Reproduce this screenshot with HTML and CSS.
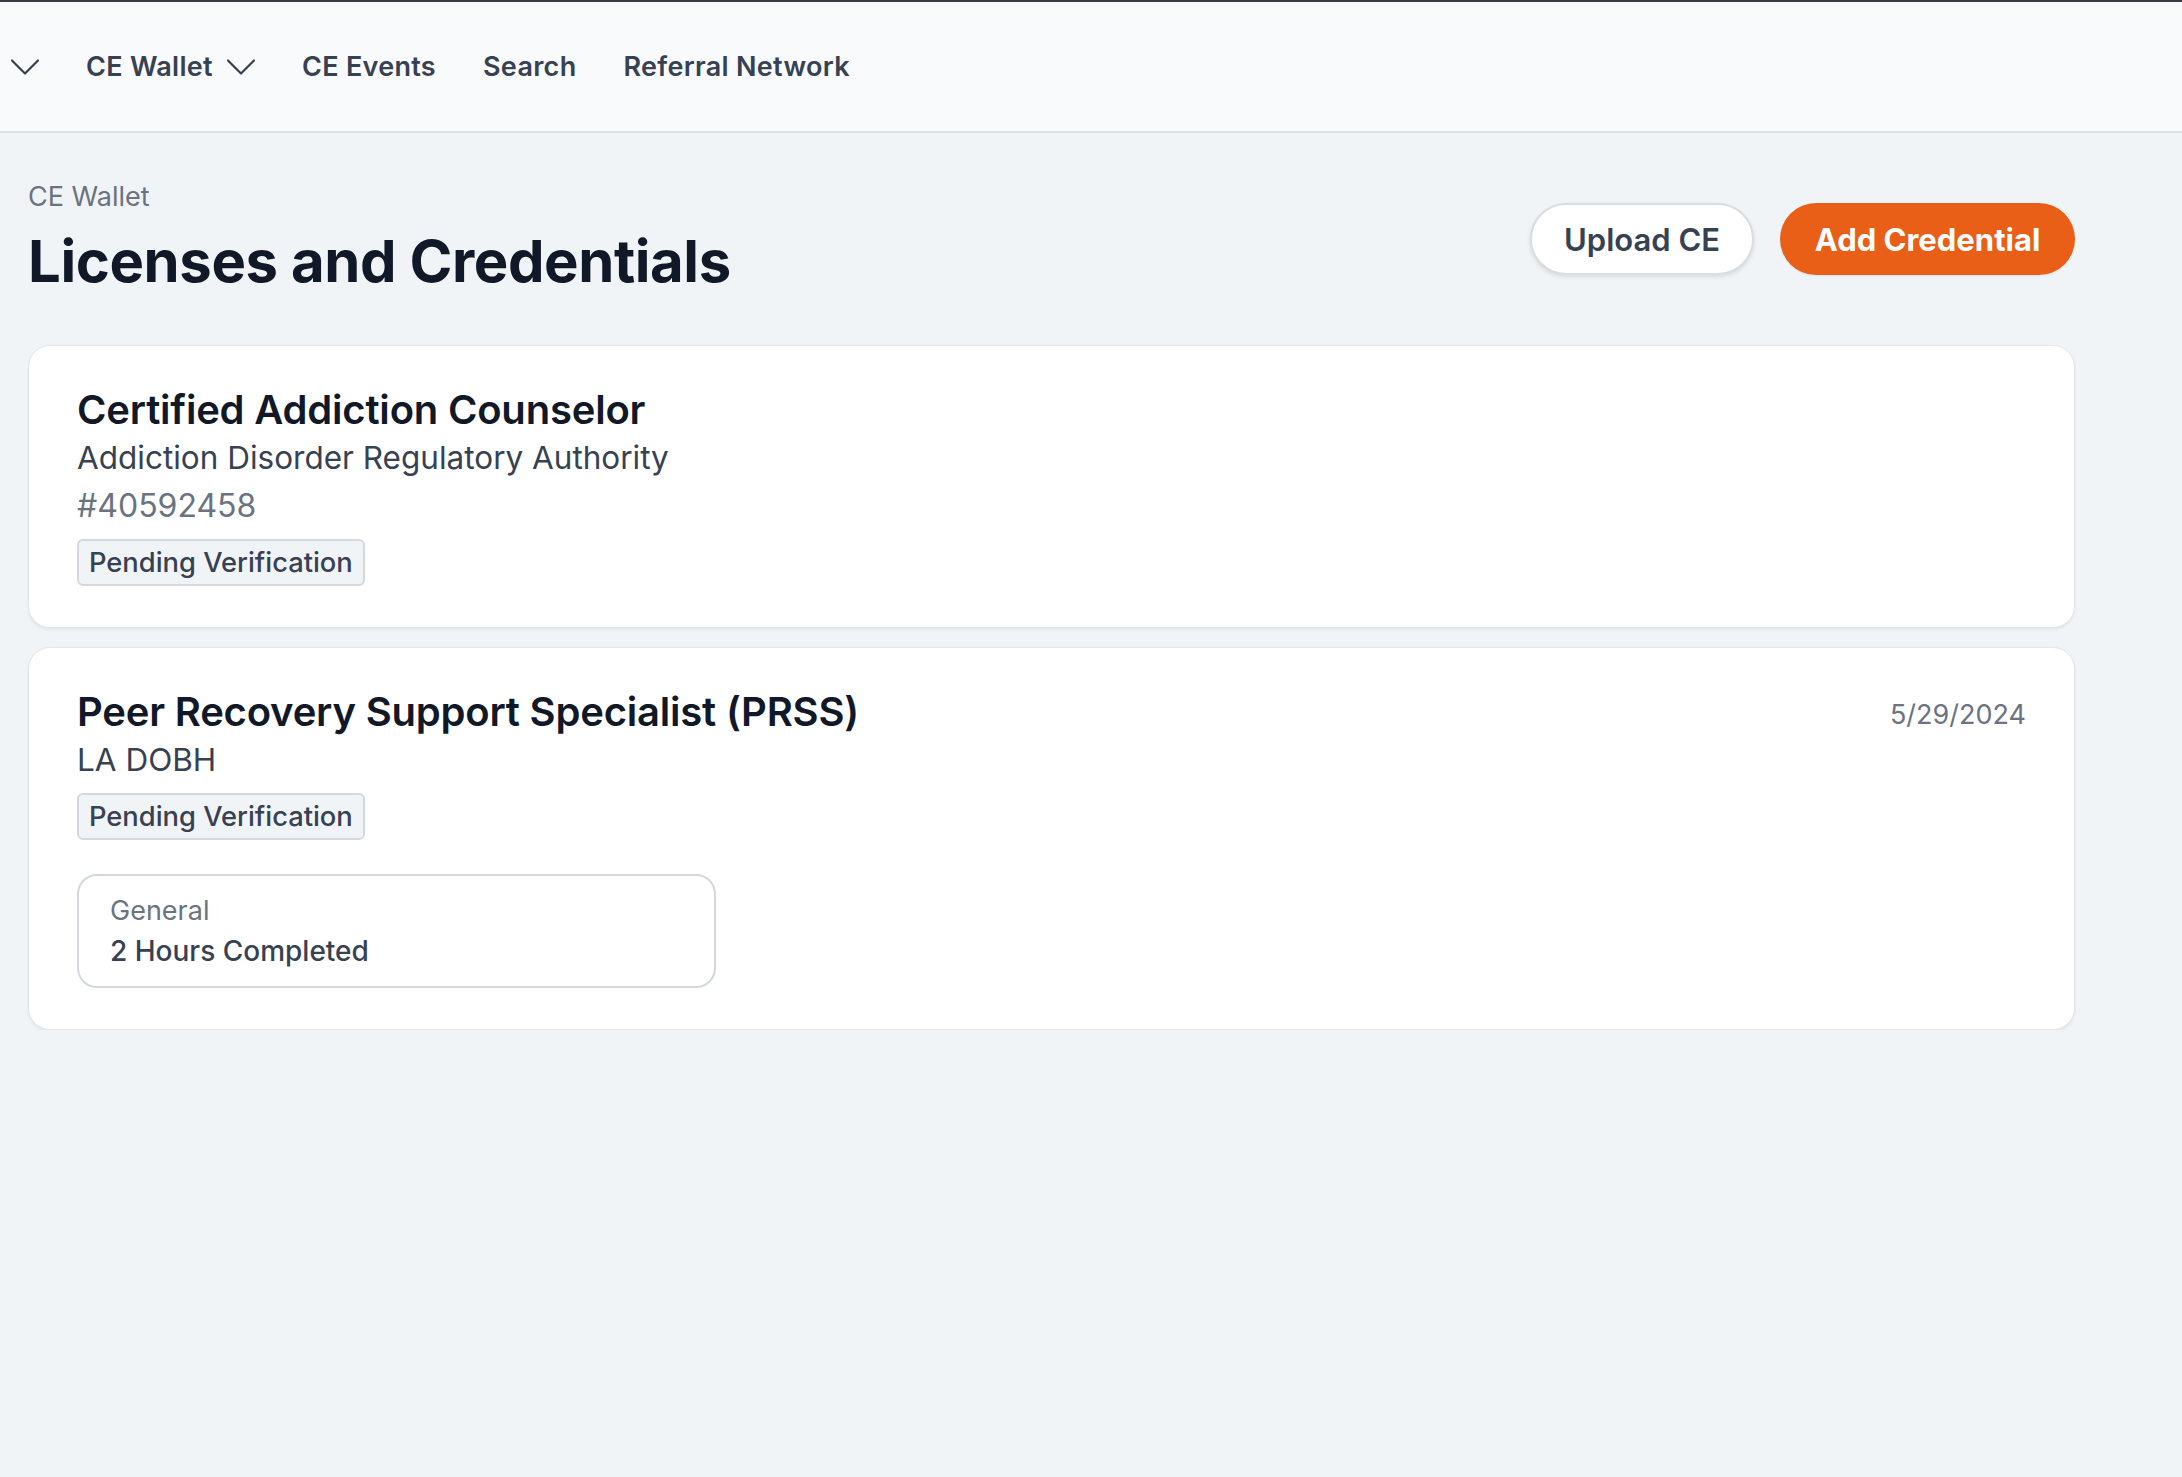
FILE: index.html
```html
<!DOCTYPE html>
<html lang="en">
<head>
<meta charset="utf-8">
<title>Licenses and Credentials</title>
<link rel="stylesheet" href="styles.css">
</head>
<body>
<div class="topline"></div>
<nav class="nav">
  <span class="nav-item nav-cut">
    <svg class="chev" viewBox="0 0 28 16" width="28" height="16"><path d="M1 1.5 L14 14.5 L27 1.5" fill="none" stroke="currentColor" stroke-width="2.2" stroke-linecap="round" stroke-linejoin="round"/></svg>
  </span>
  <span class="nav-item">CE Wallet
    <svg class="chev" viewBox="0 0 28 16" width="28" height="16"><path d="M1 1.5 L14 14.5 L27 1.5" fill="none" stroke="currentColor" stroke-width="2.2" stroke-linecap="round" stroke-linejoin="round"/></svg>
  </span>
  <span class="nav-item">CE Events</span>
  <span class="nav-item">Search</span>
  <span class="nav-item">Referral Network</span>
</nav>

<main class="main">
  <header class="page-head">
    <div class="titles">
      <div class="crumb">CE Wallet</div>
      <h1 class="title">Licenses and Credentials</h1>
    </div>
    <div class="actions">
      <button class="btn btn-outline">Upload CE</button>
      <button class="btn btn-primary">Add Credential</button>
    </div>
  </header>

  <section class="cards">
    <article class="card">
      <div class="card-head">
        <h2 class="card-title">Certified Addiction Counselor</h2>
      </div>
      <div class="card-sub">Addiction Disorder Regulatory Authority</div>
      <div class="card-num">#40592458</div>
      <span class="badge">Pending Verification</span>
    </article>

    <article class="card">
      <div class="card-head">
        <h2 class="card-title">Peer Recovery Support Specialist (PRSS)</h2>
        <span class="card-date">5/29/2024</span>
      </div>
      <div class="card-sub">LA DOBH</div>
      <span class="badge">Pending Verification</span>
      <div class="hours-grid">
        <div class="hours">
          <div class="hours-label">General</div>
          <div class="hours-value">2 Hours Completed</div>
        </div>
      </div>
    </article>
  </section>
</main>
</body>
</html>
```

FILE: styles.css
```css
* { box-sizing: border-box; }

html, body {
  margin: 0;
  padding: 0;
  background: #f1f4f7;
  font-family: Inter, "Noto Sans", "Liberation Sans", sans-serif;
  color: #374151;
  min-height: 100%;
}

.topline {
  height: 2px;
  background: #383d45;
}

.nav {
  height: 131px;
  background: #f8fafb;
  border-bottom: 2px solid #dcdfe3;
  display: flex;
  align-items: center;
  gap: 47px;
  padding-left: 11px;
}

.nav-item {
  display: flex;
  align-items: center;
  gap: 14px;
  font-size: 27px;
  font-weight: 600;
  color: #374151;
  letter-spacing: 0.3px;
  white-space: nowrap;
}

.chev {
  display: block;
  color: #374151;
}

.main {
  padding: 46px 107px 0 28px;
}

.page-head {
  display: flex;
  align-items: center;
  justify-content: space-between;
}

.crumb {
  font-size: 27px;
  line-height: 36px;
  color: #6b7280;
  font-weight: 400;
}

.title {
  margin: 14px 0 0;
  font-size: 58px;
  line-height: 64px;
  font-weight: 700;
  color: #111827;
  letter-spacing: -0.4px;
}

.actions {
  display: flex;
  gap: 26px;
  margin-top: 6px;
}

.btn {
  height: 72px;
  border-radius: 36px;
  font-family: inherit;
  font-size: 31px;
  font-weight: 600;
  padding: 0 20px;
  cursor: pointer;
  white-space: nowrap;
}

.btn-outline {
  width: 224px;
  background: #ffffff;
  color: #374151;
  border: 2px solid #d9dce1;
  box-shadow: 0 2px 4px rgba(0, 0, 0, 0.10);
}

.btn-primary {
  width: 295px;
  background: #e95f17;
  color: #ffffff;
  border: none;
  font-weight: 700;
  font-size: 31px;
  box-shadow: 0 1px 2px rgba(0, 0, 0, 0.08);
}

.cards {
  margin-top: 52px;
  display: flex;
  flex-direction: column;
  gap: 19px;
}

.card {
  background: #ffffff;
  border: 1px solid #e3e6ea;
  border-radius: 22px;
  padding: 40px 48px 41px;
  box-shadow: 0 2px 3px rgba(0, 0, 0, 0.06);
  display: flex;
  flex-direction: column;
  align-items: flex-start;
}

.card-head {
  width: 100%;
  display: flex;
  justify-content: space-between;
  align-items: center;
}

.card-title {
  margin: 0;
  font-size: 40px;
  line-height: 48px;
  font-weight: 600;
  color: #111827;
  letter-spacing: -0.2px;
}

.card-date {
  font-size: 27px;
  color: #6b7280;
  font-weight: 400;
  margin-top: 4px;
}

.card-sub {
  font-size: 31.5px;
  line-height: 48px;
  color: #374151;
}

.card-num {
  font-size: 32px;
  line-height: 48px;
  color: #6b7280;
}

.badge {
  margin-top: 9px;
  height: 47px;
  line-height: 43px;
  padding: 0 10px;
  border: 2px solid #d4d7dc;
  border-radius: 6px;
  background: #f1f4f7;
  font-size: 27.3px;
  font-weight: 500;
  color: #374151;
  white-space: nowrap;
}

.hours-grid {
  margin-top: 34px;
  width: 100%;
  display: grid;
  grid-template-columns: repeat(3, 1fr);
  gap: 16px;
}

.hours {
  border: 2px solid #d4d7dc;
  border-radius: 20px;
  padding: 15px 31px;
}

.hours-label {
  font-size: 27px;
  line-height: 40px;
  color: #6b7280;
}

.hours-value {
  font-size: 28px;
  line-height: 40px;
  color: #374151;
  font-weight: 500;
}
```
